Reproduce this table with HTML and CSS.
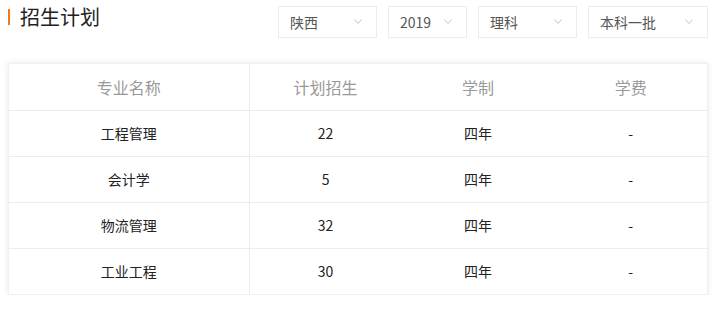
FILE: index.html
```html
<!DOCTYPE html>
<html lang="zh">
<head>
<meta charset="utf-8">
<link rel="stylesheet" href="styles.css">
</head>
<body>
<div class="page">
  <div class="top">
    <h2 class="title">招生计划</h2>
    <div class="filters">
      <div class="sel w98"><span>陕西</span><svg class="chev" viewBox="0 0 8 5"><path d="M0.5 0.5 L4 4.5 L7.5 0.5" fill="none" stroke="#c4c4c4" stroke-width="1"/></svg></div>
      <div class="sel w79"><span>2019</span><svg class="chev" viewBox="0 0 8 5"><path d="M0.5 0.5 L4 4.5 L7.5 0.5" fill="none" stroke="#c4c4c4" stroke-width="1"/></svg></div>
      <div class="sel w99"><span>理科</span><svg class="chev" viewBox="0 0 8 5"><path d="M0.5 0.5 L4 4.5 L7.5 0.5" fill="none" stroke="#c4c4c4" stroke-width="1"/></svg></div>
      <div class="sel w120"><span>本科一批</span><svg class="chev" viewBox="0 0 8 5"><path d="M0.5 0.5 L4 4.5 L7.5 0.5" fill="none" stroke="#c4c4c4" stroke-width="1"/></svg></div>
    </div>
  </div>
  <div class="card">
    <table class="plan">
      <thead>
        <tr><th class="c1">专业名称</th><th>计划招生</th><th>学制</th><th>学费</th></tr>
      </thead>
      <tbody>
        <tr><td class="c1">工程管理</td><td>22</td><td>四年</td><td>-</td></tr>
        <tr><td class="c1">会计学</td><td>5</td><td>四年</td><td>-</td></tr>
        <tr><td class="c1">物流管理</td><td>32</td><td>四年</td><td>-</td></tr>
        <tr><td class="c1">工业工程</td><td>30</td><td>四年</td><td>-</td></tr>
      </tbody>
    </table>
  </div>
</div>
</body>
</html>
```

FILE: styles.css
```css
* { box-sizing: border-box; }
html, body { margin: 0; padding: 0; background: #fff; }
body { font-family: "Noto Sans CJK SC", "Noto Sans", sans-serif; color: #222; }
.page { padding: 6px 10px 0 8px; width: 718px; }
.top { display: flex; justify-content: space-between; align-items: flex-start; height: 57px; }
.title {
  margin: 3px 0 0 0;
  padding-left: 10px;
  border-left: 2px solid #f07a1f;
  font-size: 20px;
  font-weight: normal;
  line-height: 16px;
  height: 16px;
  color: #222;
  display: flex;
  align-items: center;
}
.filters { display: flex; gap: 11px; }
.sel {
  height: 32px;
  border: 1px solid #ececec;
  display: flex;
  align-items: center;
  justify-content: space-between;
  padding: 0 14px 0 11px;
  font-size: 14px;
  color: #555;
}
.sel span { line-height: 1; }
.w98 { width: 99px; }
.w79 { width: 79px; }
.w99 { width: 99px; }
.w120 { width: 120px; }
.chev { width: 8px; height: 5px; margin-top: -2px; }
.card {
  width: 700px;
  background: #fff;
  box-shadow: 0 0 6px rgba(0,0,0,0.09);
  border: 1px solid #f0f0f0;
}
.plan { width: 100%; border-collapse: collapse; table-layout: fixed; }
.plan th, .plan td {
  height: 46px;
  text-align: center;
  border-bottom: 1px solid #ececec;
  padding: 0;
}
.plan tbody tr:last-child td { border-bottom: none; }
.plan th { font-size: 16px; font-weight: normal; color: #999; }
.plan td { font-size: 14px; color: #222; }
.plan .c1 { width: 240px; border-right: 1px solid #ececec; }
```
